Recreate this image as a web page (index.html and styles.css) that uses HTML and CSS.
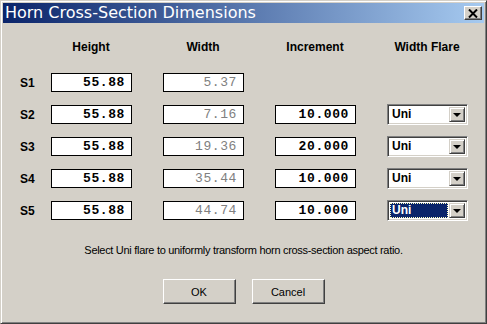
FILE: index.html
```html
<!DOCTYPE html>
<html lang="en">
<head>
  <meta charset="UTF-8" />
  <meta name="viewport" content="width=device-width, initial-scale=1.0" />
  <title>Horn Cross-Section Dimensions</title>
  <link rel="stylesheet" href="styles.css">
</head>
<body>

  <!-- DIALOG WINDOW -->
  <div class="window">
    <div class="titlebar">
      <span class="title">Horn Cross-Section Dimensions</span>
      <button class="close" type="button" aria-label="Close">
        <svg width="10" height="9" viewBox="0 0 10 9">
          <path d="M1 0.5 L9 8.5 M9 0.5 L1 8.5" stroke="#000" stroke-width="2" fill="none"/>
        </svg>
      </button>
    </div>

    <div class="dialog-body">
      <div class="grid">
        <div></div>
        <div class="head">Height</div>
        <div class="head">Width</div>
        <div class="head">Increment</div>
        <div class="head">Width Flare</div>

        <div class="label">S1</div>
        <div class="edit">55.88</div>
        <div class="edit off">5.37</div>
        <div></div>
        <div></div>

        <div class="label">S2</div>
        <div class="edit">55.88</div>
        <div class="edit off">7.16</div>
        <div class="edit">10.000</div>
        <div class="combo"><span class="combo-text">Uni</span><span class="drop"></span></div>

        <div class="label">S3</div>
        <div class="edit">55.88</div>
        <div class="edit off">19.36</div>
        <div class="edit">20.000</div>
        <div class="combo"><span class="combo-text">Uni</span><span class="drop"></span></div>

        <div class="label">S4</div>
        <div class="edit">55.88</div>
        <div class="edit off">35.44</div>
        <div class="edit">10.000</div>
        <div class="combo"><span class="combo-text">Uni</span><span class="drop"></span></div>

        <div class="label">S5</div>
        <div class="edit">55.88</div>
        <div class="edit off">44.74</div>
        <div class="edit">10.000</div>
        <div class="combo"><span class="combo-text selected">Uni</span><span class="drop"></span></div>
      </div>

      <p class="hint">Select Uni flare to uniformly transform horn cross-section aspect ratio.</p>

      <div class="buttons">
        <button type="button" class="btn">OK</button>
        <button type="button" class="btn">Cancel</button>
      </div>
    </div>
  </div>

</body>
</html>
```

FILE: styles.css
```css
* {
  box-sizing: border-box;
}

body {
  margin: 0;
  font-family: "Liberation Sans", Arial, sans-serif;
  background: #d4d0c8;
}

.window {
  width: 487px;
  height: 324px;
  background: #d4d0c8;
  border: 1px solid;
  border-color: #d4d0c8 #404040 #404040 #d4d0c8;
  box-shadow: inset 1px 1px #fff, inset -1px -1px #808080;
  padding: 2px;
}

/* title bar */
.titlebar {
  height: 20px;
  display: flex;
  align-items: center;
  justify-content: space-between;
  padding: 0 2px 0 2px;
  background: linear-gradient(to right, #0a246a, #a6caf0);
}

.title {
  color: #fff;
  font-family: "DejaVu Sans", Verdana, sans-serif;
  font-size: 16px;
  line-height: 20px;
}

.close {
  width: 18px;
  height: 14px;
  padding: 0;
  display: flex;
  align-items: center;
  justify-content: center;
  background: #d4d0c8;
  border: 1px solid;
  border-color: #fff #404040 #404040 #fff;
  box-shadow: inset -1px -1px #808080;
}

/* form grid */
.dialog-body {
  padding: 17px 0 0 17px;
}

.grid {
  display: grid;
  grid-template-columns: 31px 112px 112px 112px 81px;
  grid-auto-rows: 21px;
  row-gap: 11px;
  align-items: center;
}

.grid .head {
  width: 80px;
  text-align: center;
  font-weight: bold;
  font-size: 12px;
  line-height: 14px;
  align-self: start;
  height: 14px;
}

.grid > :nth-child(-n+5) {
  margin-bottom: -3px;
}

.label {
  font-weight: bold;
  font-size: 12px;
}

.edit {
  width: 81px;
  height: 19px;
  border: 1px solid #000;
  background: #fff;
  text-align: right;
  padding-right: 6px;
  font-family: "Liberation Mono", "Courier New", monospace;
  font-weight: bold;
  font-size: 13px;
  letter-spacing: 0.6px;
  line-height: 17px;
  color: #000;
}

.edit.off {
  color: #808080;
  font-weight: normal;
}

/* dropdown */
.combo {
  width: 81px;
  height: 21px;
  display: flex;
  background: #fff;
  border: 1px solid;
  border-color: #808080 #fff #fff #808080;
  box-shadow: inset 1px 1px #404040, inset -1px -1px #d4d0c8;
  padding: 2px 2px 2px 2px;
}

.combo-text {
  flex: 1;
  font-weight: bold;
  font-size: 12px;
  line-height: 15px;
  padding-left: 2px;
  margin-right: 1px;
}

.combo-text.selected {
  background: #0a246a;
  color: #fff;
  outline: 1px dotted #ffffc0;
  outline-offset: -1px;
}

.drop {
  width: 16px;
  height: 15px;
  background: #d4d0c8;
  border: 1px solid;
  border-color: #d4d0c8 #404040 #404040 #d4d0c8;
  box-shadow: inset 1px 1px #fff, inset -1px -1px #808080;
  display: flex;
  align-items: center;
  justify-content: center;
}

.drop::after {
  content: "";
  border-left: 4px solid transparent;
  border-right: 4px solid transparent;
  border-top: 4px solid #000;
  margin-top: 1px;
}

/* hint and buttons */
.hint {
  margin: 23px 17px 0 0;
  text-align: center;
  font-size: 11px;
  line-height: 13px;
  letter-spacing: -0.3px;
}

.buttons {
  display: flex;
  justify-content: center;
  gap: 16px;
  margin: 22px 17px 0 0;
}

.btn {
  width: 73px;
  height: 25px;
  font-family: "Liberation Sans", Arial, sans-serif;
  font-size: 11px;
  color: #000;
  background: #d4d0c8;
  border: 1px solid;
  border-color: #fff #404040 #404040 #fff;
  box-shadow: inset -1px -1px #808080;
}
```
